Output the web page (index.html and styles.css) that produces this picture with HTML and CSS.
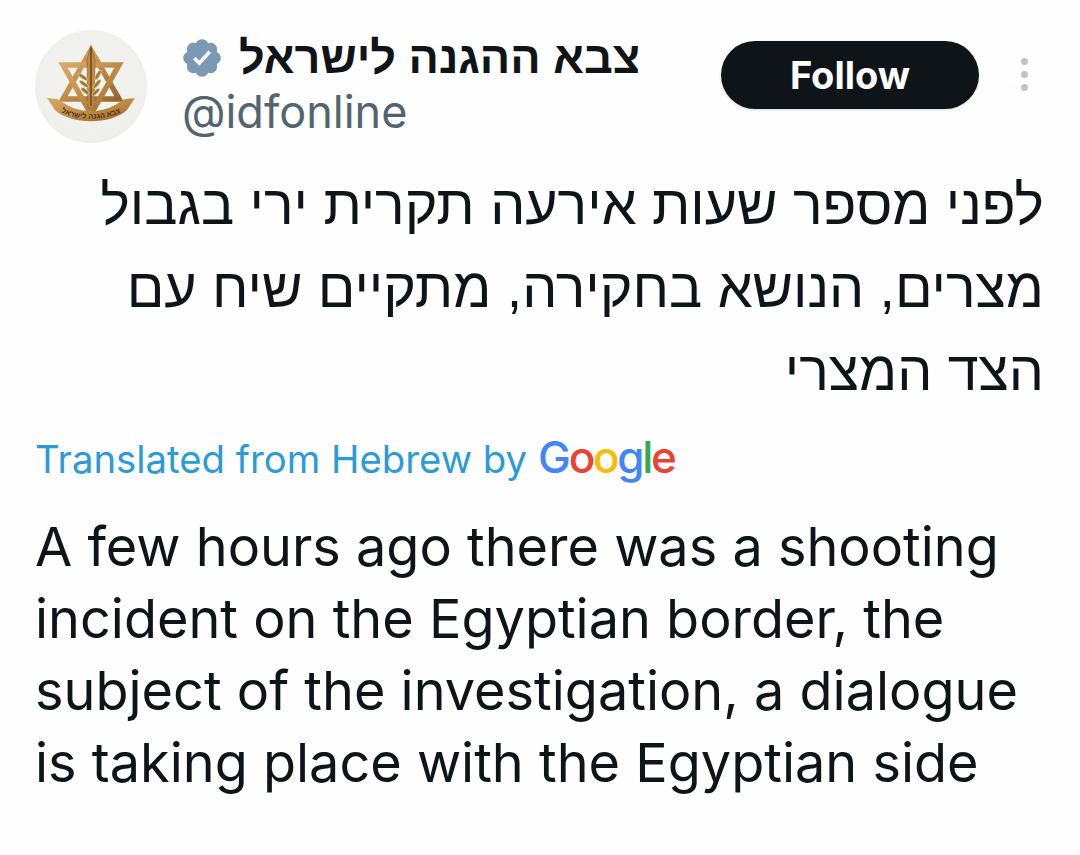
FILE: index.html
```html
<!DOCTYPE html>
<html lang="en">
<head>
<meta charset="utf-8">
<title>Tweet</title>
<link rel="stylesheet" href="styles.css">
</head>
<body>
<main class="tweet">
  <header class="head">
    <div class="avatar">
      <svg class="emblem" viewBox="0 0 112 112" aria-hidden="true">
        <defs>
          <linearGradient id="gold" x1="0" y1="0" x2="1" y2="1">
            <stop offset="0" stop-color="#d8aa68"/>
            <stop offset=".55" stop-color="#bd8a45"/>
            <stop offset="1" stop-color="#94652c"/>
          </linearGradient>
        </defs>
        <path d="M56 20 84 69H28Z" fill="none" stroke="url(#gold)" stroke-width="5.5"/>
        <path d="M28 35H84L56 84Z" fill="none" stroke="url(#gold)" stroke-width="5.5"/>
        <path d="M56 16 60 30 59 78H53L52 30Z" fill="#c08d48" stroke="#8f6128" stroke-width=".7"/>
        <path d="M56 18V76" stroke="#6d4717" stroke-width="1.6"/>
        <g fill="#a87833" stroke="#f6ead4" stroke-width=".5">
          <ellipse cx="48" cy="47" rx="5.5" ry="1.9" transform="rotate(35 48 47)"/>
          <ellipse cx="49" cy="54" rx="5.5" ry="1.9" transform="rotate(35 49 54)"/>
          <ellipse cx="50" cy="61" rx="5" ry="1.9" transform="rotate(40 50 61)"/>
          <ellipse cx="63" cy="45" rx="5.5" ry="1.8" transform="rotate(-60 63 45)"/>
          <ellipse cx="62" cy="54" rx="5.5" ry="1.8" transform="rotate(-50 62 54)"/>
          <ellipse cx="61" cy="62" rx="5" ry="1.8" transform="rotate(-45 61 62)"/>
        </g>
        <path d="M12 68 22 69 32 75C46 83 66 83 80 75L90 69 100 68 92 80C76 95 36 95 20 80Z" fill="url(#gold)"/>
        <path id="ribbon" d="M21 79C38 92 74 92 91 79" fill="none"/>
        <text class="motto" dir="rtl"><textPath href="#ribbon" startOffset="50%" text-anchor="middle">צבא הגנה לישראל</textPath></text>
      </svg>
    </div>
    <div class="who">
      <div class="name-row">
        <svg class="badge" viewBox="0 0 24 24" aria-hidden="true">
          <path fill="#7c99b4" d="M22.25 12c0-1.43-.88-2.67-2.19-3.34.46-1.39.2-2.9-.81-3.91s-2.52-1.27-3.91-.81C14.67 2.63 13.43 1.75 12 1.75s-2.67.88-3.33 2.19c-1.4-.46-2.91-.2-3.92.81s-1.26 2.52-.8 3.91C2.63 9.33 1.75 10.57 1.75 12s.88 2.67 2.2 3.34c-.46 1.39-.21 2.9.8 3.91s2.52 1.26 3.91.81c.67 1.31 1.91 2.19 3.34 2.19s2.68-.88 3.34-2.19c1.39.45 2.9.2 3.91-.81s1.27-2.52.81-3.91c1.31-.67 2.19-1.91 2.19-3.34z"/>
          <path fill="#f4f7f9" d="m10.54 16.2-3.44-3.44 1.41-1.41 1.97 1.97 5.01-5.42 1.46 1.36z"/>
        </svg>
        <span class="name" dir="rtl">צבא ההגנה לישראל</span>
      </div>
      <div class="handle">@idfonline</div>
    </div>
    <button class="follow" type="button">Follow</button>
    <div class="more" aria-hidden="true"><i></i><i></i><i></i></div>
  </header>
  <p class="hebrew" dir="rtl">לפני מספר שעות אירעה תקרית ירי בגבול מצרים, הנושא בחקירה, מתקיים שיח עם הצד המצרי</p>
  <div class="translated">
    <span>Translated from Hebrew by</span>
    <span class="google"><b class="b">G</b><b class="r">o</b><b class="y">o</b><b class="b">g</b><b class="g">l</b><b class="r">e</b></span>
  </div>
  <p class="english">A few hours ago there was a shooting incident on the Egyptian border, the subject of the investigation, a dialogue is taking place with the Egyptian side</p>
</main>
</body>
</html>
```

FILE: styles.css
```css
* { box-sizing: border-box; }
html, body { margin: 0; background: #fefefe; }
body { width: 1080px; height: 855px; overflow: hidden; font-family: "Inter", "Liberation Sans", sans-serif; color: #0f1419; }
.tweet { padding: 30px 36px 0 35px; }
.head { display: flex; align-items: flex-start; height: 113px; }
.avatar { width: 112px; height: 113px; flex: none; border-radius: 50%; background: radial-gradient(circle at 50% 45%, #f4f4f2 0, #efefec 70%, #e0e0dc 100%); }
.emblem { display: block; width: 112px; height: 112px; }
.motto { font: 700 7.5px "Liberation Sans", sans-serif; fill: #4f3210; }
.who { width: 476px; margin-left: 36px; flex: none; }
.name-row { display: flex; align-items: center; gap: 15px; height: 56px; }
.badge { width: 44px; height: 44px; flex: none; margin-left: -3px; }
.name { font: 700 45px/56px "Liberation Sans", sans-serif; white-space: nowrap; color: #0f1419; }
.handle { font-size: 45px; line-height: 52px; color: #536471; margin-left: -1px; }
.follow { flex: none; width: 258px; height: 68px; margin: 11px 0 0 62px; padding: 0; border: 0; border-radius: 34px; background: #0f1419; color: #fff; font: 700 38px "Inter", sans-serif; box-shadow: 0 1px 3px rgba(0,0,0,.15); }
.more { flex: none; display: flex; flex-direction: column; gap: 6px; margin: 28px 0 0 42px; }
.more i { display: block; width: 7px; height: 7px; border-radius: 50%; background: #b9c4cc; }
.hebrew { margin: 21px 0 0; font: 400 55.5px/83px "Liberation Sans", sans-serif; color: #0f1419; }
.translated { display: flex; align-items: baseline; gap: 11px; margin-top: 18px; font-size: 38.3px; line-height: 52px; color: #2b9bd8; }
.google { font: 400 44px/52px "Inter", sans-serif; letter-spacing: -2.3px; }
.google b { font-weight: 500; }
.b { color: #4285f4; } .r { color: #ea4335; } .y { color: #fbbc05; } .g { color: #34a853; }
.english { margin: 26px 0 0; font-size: 54px; line-height: 72px; color: #0f1419; }
```
